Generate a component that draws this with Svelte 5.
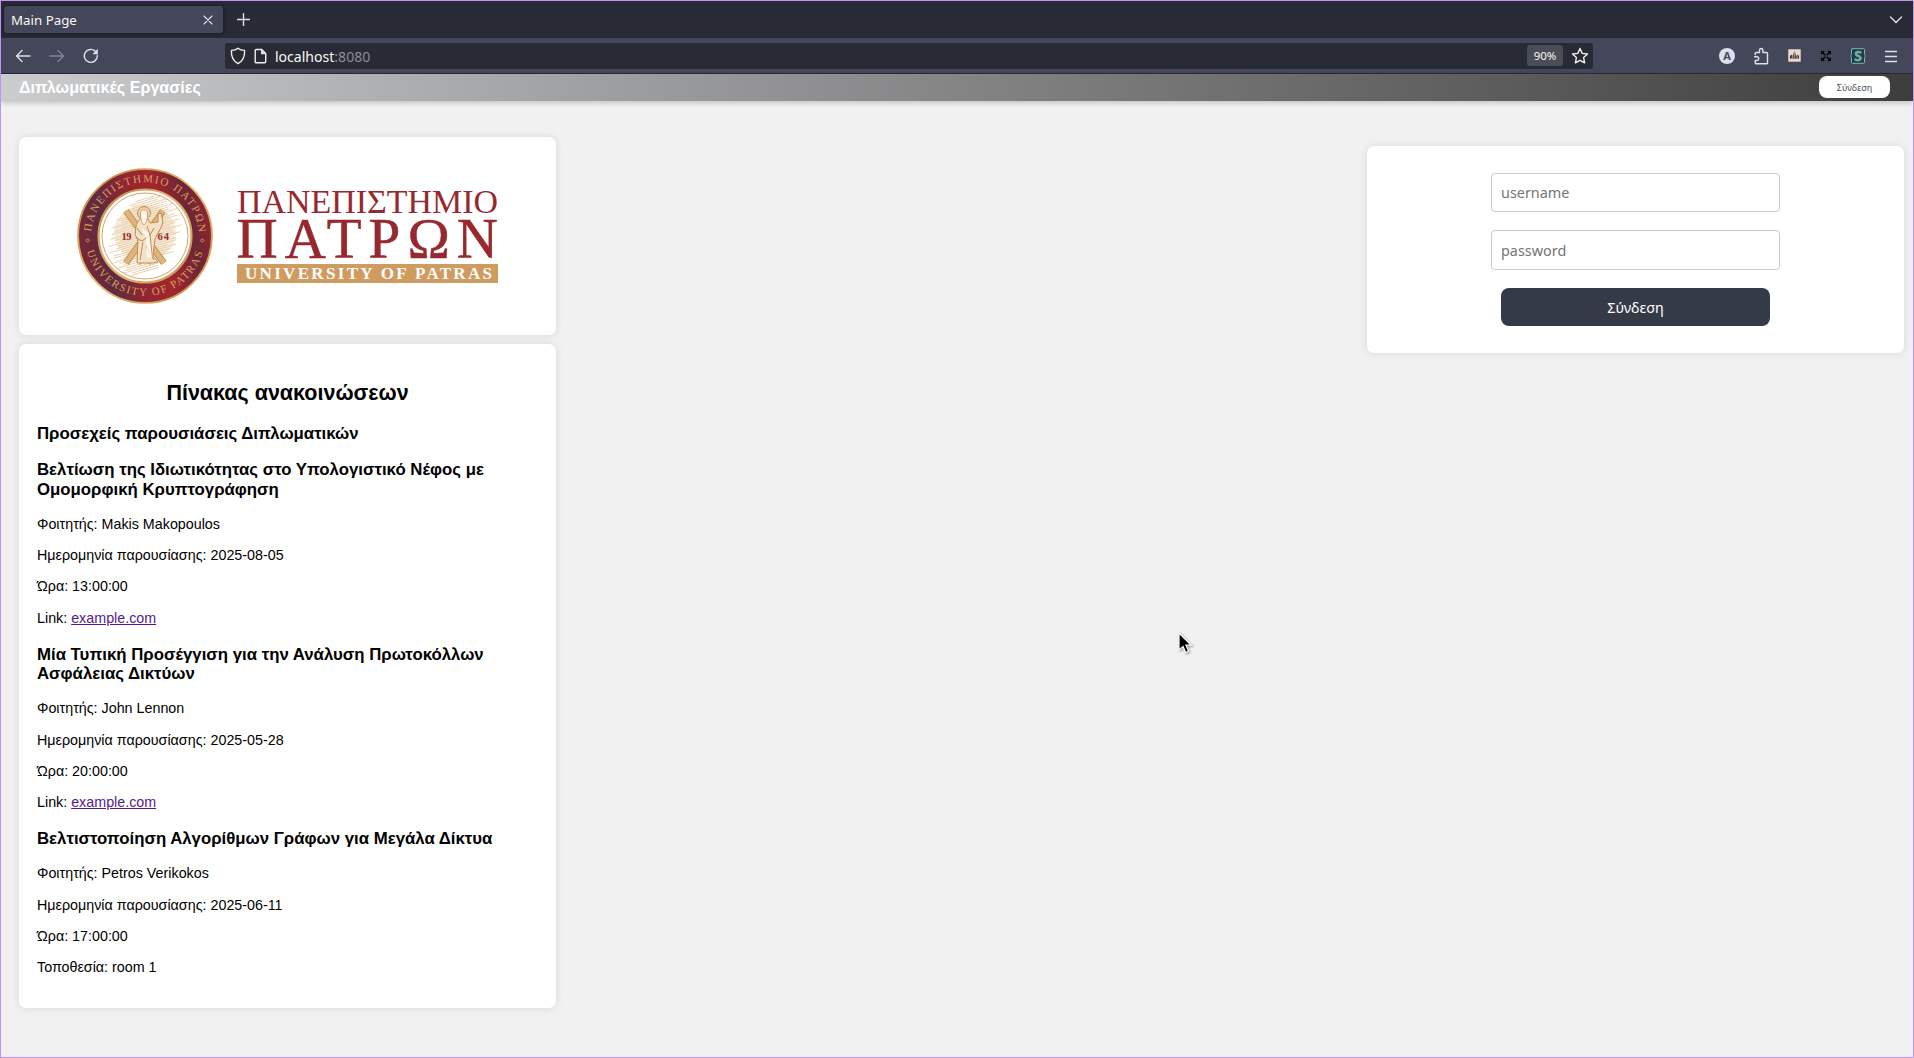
<script>
  const talks = [
    {
      title: 'Βελτίωση της Ιδιωτικότητας στο Υπολογιστικό Νέφος με Ομομορφική Κρυπτογράφηση',
      student: 'Makis Makopoulos', date: '2025-08-05', time: '13:00:00', link: 'example.com'
    },
    {
      title: 'Μία Τυπική Προσέγγιση για την Ανάλυση Πρωτοκόλλων Ασφάλειας Δικτύων',
      student: 'John Lennon', date: '2025-05-28', time: '20:00:00', link: 'example.com'
    },
    {
      title: 'Βελτιστοποίηση Αλγορίθμων Γράφων για Μεγάλα Δίκτυα',
      student: 'Petros Verikokos', date: '2025-06-11', time: '17:00:00', place: 'room 1'
    }
  ];
  // pencil strokes behind the figure of the seal
  const strokes = Array.from({ length: 34 }, (_, i) => {
    const t = -37 + i * 2.2;
    const h = Math.sqrt(Math.max(0, 39 * 39 - t * t)) * (0.78 + 0.16 * Math.sin(i * 2.3));
    return { x1: -h, y1: t + h * 0.28, x2: h, y2: t - h * 0.32 };
  });
</script>

<div class="window">
  <div class="tabs">
    <div class="tab">
      <span>Main Page</span>
      <svg width="10" height="10" viewBox="0 0 10 10"><path d="M1 1l8 8M9 1l-8 8" /></svg>
    </div>
    <svg class="plus" width="13" height="13" viewBox="0 0 13 13"><path d="M6.500 .5v12M.5 6.500h12" /></svg>
    <svg class="chev" width="14" height="8" viewBox="0 0 14 8"><path d="M1.500 1L7 6.500 12.500 1" /></svg>
  </div>

  <div class="toolbar">
    <svg class="back" width="16" height="14" viewBox="0 0 16 14"><path d="M15 7H1.500M7 1.500L1.500 7 7 12.500" /></svg>
    <svg class="fwd" width="16" height="14" viewBox="0 0 16 14"><path d="M1 7h13.500M9 1.500L14.500 7 9 12.500" /></svg>
    <svg class="reload" width="16" height="16" viewBox="0 0 16 16"><path d="M12.600 3.500A6.500 6.500 0 1 0 14.300 7.500" /><path class="solid" d="M14.800 .8v5.400H9.400z" /></svg>
    <div class="url">
      <svg width="16" height="18" viewBox="0 0 16 18"><path d="M8 1.200c1.800 1.600 4 2.200 6.600 2.200.3 6-1.300 10.400-6.600 13.300C2.700 13.800 1.100 9.400 1.400 3.400 4 3.400 6.200 2.800 8 1.200z" /></svg>
      <svg class="page" width="13" height="16" viewBox="0 0 13 16"><path d="M2.200 1.500h5.500l4 4v8.200a1 1 0 0 1-1 1H2.200a1 1 0 0 1-1-1V2.500a1 1 0 0 1 1-1z" /><path class="solid" d="M7 1l5.500 5.300H7z" /></svg>
      <span class="addr">localhost<i>:8080</i></span>
      <span class="zoom">90%</span>
      <svg class="star" width="18" height="18" viewBox="0 0 18 18"><path d="M9 1.500l2.200 4.900 5.300.6-3.900 3.600 1 5.300L9 13.300l-4.600 2.600 1-5.300L1.500 7l5.300-.6z" /></svg>
    </div>
    <div class="ext">
      <div class="avatar">A</div>
      <svg width="16" height="18" viewBox="0 0 16 18"><path d="M2.200 7.800V6.500a1 1 0 0 1 1-1h3.300V3.200a1.700 1.700 0 0 1 3.400 0v2.300h3.600a1 1 0 0 1 1 1v9.200a1 1 0 0 1-1 1H3.200a1 1 0 0 1-1-1v-2.200h1.600a1.900 1.900 0 0 0 0-3.800H1.600" /></svg>
      <svg class="photo" width="13" height="13" viewBox="0 0 13 13"><rect width="13" height="13" rx="1" fill="#c3aea1" /><rect x="1" y="1" width="11" height="11" fill="#e6dbd2" /><path d="M2 9.500V7l1.500-1.500.8 1.500 1-.5V4.500h2.400v2l1 .5 1-1.500L11 7v2.500z" fill="#39353a" /><path d="M6.500 3v5M4.500 7v2M9 7v2" stroke="#a58b7c" /></svg>
      <svg class="expand" width="12" height="12" viewBox="0 0 12 12"><path d="M1.500 1.500L5.200 5.200M10.500 1.500L6.800 5.200M10.500 10.500L6.800 6.800M1.500 10.500l3.700-3.700" /><path class="tips" d="M1 4.800V1h3.800zM7.200 1H11v3.800zM11 7.200V11H7.200zM4.800 11H1V7.200z" /></svg>
      <svg class="sty" width="16" height="16" viewBox="0 0 16 16"><path d="M2.500 .7h11a1 1 0 0 1 1 1V6.500L15.500 8l-1 1.500v4.800a1 1 0 0 1-1 1h-11a1 1 0 0 1-1-1V9.500L.5 8l1-1.500V1.700a1 1 0 0 1 1-1z" /><text x="8" y="13.200" text-anchor="middle">S</text></svg>
      <svg class="menu" width="12" height="12" viewBox="0 0 12 12"><path d="M0 1.500h12M0 6.500h12M0 11.500h12" /></svg>
    </div>
  </div>

  <header>
    <h1>Διπλωματικές Εργασίες</h1>
    <button>Σύνδεση</button>
  </header>

  <main>
    <div class="left">
      <section class="card logo">
        <svg width="537" height="198" viewBox="19 137 537 198">
          <defs>
            <linearGradient id="band" x1="0" y1="0.6" x2="1" y2="0.4">
              <stop offset="0" stop-color="#7b2636" /><stop offset=".2" stop-color="#5c2b3f" />
              <stop offset=".4" stop-color="#8d2632" /><stop offset=".62" stop-color="#a3262e" />
              <stop offset=".85" stop-color="#6c2636" /><stop offset="1" stop-color="#912631" />
            </linearGradient>
            <linearGradient id="gold" x1="0" y1="0" x2="1" y2="1">
              <stop offset="0" stop-color="#c58a45" /><stop offset=".5" stop-color="#e3b673" /><stop offset="1" stop-color="#c98f4b" />
            </linearGradient>
            <path id="over" d="M91.200 232.800A53.900 53.900 0 0 1 198.800 232.800" />
            <path id="under" d="M86.600 250.200A60.200 60.200 0 0 0 203.400 250.200" />
          </defs>
          <circle cx="145" cy="236" r="66.900" fill="url(#band)" stroke="url(#gold)" stroke-width="1.900" />
          <circle cx="145" cy="236" r="46.500" fill="#fff" stroke="url(#gold)" stroke-width="2.200" />
          <circle cx="145" cy="236" r="43" fill="none" stroke="#cf9a5b" stroke-width=".9" />
          <g transform="translate(145 236)">
            <g stroke="#e3c08f" stroke-width="1" opacity=".75">
              {#each strokes as s}<line x1={s.x1} y1={s.y1} x2={s.x2} y2={s.y2} />{/each}
            </g>
            <ellipse rx="31" ry="28" cy="-3" fill="#e9cda5" opacity=".4" />
            <g stroke="#c9935a" stroke-width="6.500"><path d="M-19-25L19 27M18-25L-19 27" /></g>
            <g stroke="#e0b57c" stroke-width="4.500"><path d="M-19-25L19 27M18-25L-19 27" /></g>
            <circle cx="-1" cy="-23" r="6.500" fill="#ecd2ab" stroke="#c08a4d" />
            <path d="M-5-17C-10-13-9-6-10-1l3 4-1 24h16l5-1-5-6 2-17C13-4 17-9 18-14l-2-9-3 1 0 8-8 1-2-4z" fill="#f3e2c8" stroke="#c08a4d" />
            <path d="M-4.500-24q3.500-5 7 0v5q-1 7-3.500 8-2.500-1-3.500-8z" fill="#fff6e8" stroke="#c08a4d" stroke-width=".7" />
            <path d="M2-10l3 9-8 6-6-3M5-1l2 20M-2 6l-3 18M1 10q4 8 8 14M-8-8l5 7M9-8l-4 7M-5 27v2M5 27v2" fill="none" stroke="#c08a4d" />
            <path d="M-4-8l5 10 1 20 5-1-3-24z" fill="#fff" opacity=".7" />
          </g>
          <g class="year"><text x="121.500" y="240" textLength="10">19</text><text x="157.500" y="240" textLength="11.500">64</text></g>
          <g class="ring">
            <text><textPath href="#over" textLength="161" startOffset="1">ΠΑΝΕΠΙΣΤΗΜΙΟ ΠΑΤΡΩΝ</textPath></text>
            <text><textPath href="#under" textLength="156" startOffset="1">UNIVERSITY OF PATRAS</textPath></text>
            <circle cx="87.700" cy="240.500" r="1.500" /><circle cx="202.300" cy="240.500" r="1.500" />
          </g>
          <g class="word">
            <text x="237" y="212.700" font-size="34.500" textLength="261" lengthAdjust="spacingAndGlyphs">ΠΑΝΕΠΙΣΤΗΜΙΟ</text>
            <text class="big" x="236.500" y="257.700" font-size="57" textLength="261.500">ΠΑΤΡΩΝ</text>
          </g>
          <rect x="237" y="264" width="261" height="19" fill="#cf9b5f" />
          <text class="eng" x="245" y="279.200" textLength="247">UNIVERSITY OF PATRAS</text>
        </svg>
      </section>

      <section class="card board">
        <h2>Πίνακας ανακοινώσεων</h2>
        <h3>Προσεχείς παρουσιάσεις Διπλωματικών</h3>
        {#each talks as t}
          <h3>{t.title}</h3>
          <p>Φοιτητής: {t.student}</p>
          <p>Ημερομηνία παρουσίασης: {t.date}</p>
          <p>Ώρα: {t.time}</p>
          {#if t.link}<p>Link: <a href="#link">{t.link}</a></p>{:else}<p>Τοποθεσία: {t.place}</p>{/if}
        {/each}
      </section>
    </div>

    <form class="card login">
      <input placeholder="username" />
      <input type="password" placeholder="password" />
      <button type="button">Σύνδεση</button>
    </form>
  </main>

  <svg class="cursor" width="18" height="26" viewBox="0 0 18 26"><path d="M2 2v17l4-3.600 2.600 6.200 3-1.300L9 14.200h5.300z" /></svg>
</div>

<style>
  .window { position: relative; box-sizing: border-box; width: 1914px; height: 1058px; border: 1px solid #bd93f9; background: #f1f1f1; overflow: hidden; font-family: "Liberation Sans", Arial, sans-serif; display: flex; flex-direction: column; }
  svg { display: block; flex: none; }
  .tabs, .toolbar { display: flex; align-items: center; box-sizing: border-box; flex: none; font-family: "Noto Sans", sans-serif; color: #f8f8f2; }
  .tabs { height: 37px; background: #282a36; padding: 0 10px 0 3px; }
  .tabs svg, .toolbar svg { fill: none; stroke: #dcdfec; stroke-width: 1.400; stroke-linecap: round; stroke-linejoin: round; }
  .tab { width: 219px; height: 27px; box-sizing: border-box; padding: 0 10px 0 7px; background: #44475a; border-radius: 3px; box-shadow: 0 0 4px rgba(0,0,0,.5); display: flex; align-items: center; justify-content: space-between; font-size: 13.300px; }
  .tabs .tab svg { stroke-width: 1.100; }
  .plus { margin-left: 14px; }
  .chev { margin-left: auto; }
  .toolbar { height: 36px; background: #44475a; border-bottom: 1px solid #282a36; padding: 0 16px 0 14px; }
  .fwd { margin-left: 18px; opacity: .4; }
  .reload { margin-left: 18px; }
  .toolbar .solid { fill: #dcdfec; stroke: none; }
  .url { margin-left: 126px; width: 1368px; height: 26px; box-sizing: border-box; padding: 0 4px 0 5px; border-radius: 3px; background: #282a36; display: flex; align-items: center; font-size: 14.050px; }
  .url svg { stroke: #f0f0ea; }
  .page { margin-left: 8px; }
  .addr { margin-left: 8px; padding-top: 2px; }
  .addr i { font-style: normal; color: #8b8c92; }
  .zoom { margin-left: auto; width: 36px; height: 21px; line-height: 22px; text-align: center; background: #4a4c57; border-radius: 3px; font-size: 11.500px; }
  .star { margin-left: 8px; }
  .ext { margin-left: auto; display: flex; align-items: center; }
  .avatar { width: 16px; height: 16px; border-radius: 50%; background: #dcdfec; color: #44475a; font-size: 11px; line-height: 16px; text-align: center; font-weight: 700; margin-right: 18px; }
  .toolbar .photo { margin-left: 19px; stroke: none; }
  .expand { margin-left: 19px; }
  .toolbar .expand { stroke: #000; stroke-width: 1.400; stroke-linecap: butt; }
  .expand .tips { fill: #000; stroke: none; }
  .sty { margin-left: 18px; }
  .toolbar .sty { overflow: visible; }
  .toolbar .sty path { fill: #1f3c43; stroke: #79b5b2; stroke-width: 1; }
  .sty text { fill: #79aba9; stroke: #79aba9; stroke-width: .6; font: bold 14px "Noto Sans", sans-serif; }
  .menu { margin-left: 19px; }
  .toolbar .menu { stroke-linecap: butt; stroke-width: 1.300; overflow: visible; }
  header { height: 27px; flex: none; box-sizing: border-box; padding: 0 23px 0 18px; display: flex; align-items: flex-start; justify-content: space-between; background: linear-gradient(90deg, #cbccce, #3d3d3d); box-shadow: 0 2px 5px rgba(0,0,0,.2); }
  h1 { margin: 4px 0 0; font-size: 16.120px; line-height: 19px; color: #fff; }
  header button { width: 71px; height: 22px; margin-top: 2px; padding: 1px 0 0; border: 0; border-radius: 8px; background: #fff; color: #4b4f5c; font: 9px "Noto Sans", sans-serif; }
  main { display: flex; justify-content: space-between; align-items: flex-start; padding: 36px 9px 0 18px; }
  .left { width: 537px; display: flex; flex-direction: column; gap: 9px; }
  .card { background: #fff; border-radius: 7px; box-shadow: 0 0 9px rgba(0,0,0,.1); box-sizing: border-box; }
  .logo { height: 198px; }
  .word { fill: #98282f; font-family: "Liberation Serif", serif; }
  .big { stroke: #98282f; stroke-width: .5; }
  .eng { fill: #fff; font: bold 17px "Liberation Serif", serif; }
  .ring { fill: #d6a15f; font: 11px "Liberation Serif", serif; }
  .ring circle { fill: none; stroke: #d6a15f; stroke-width: .8; }
  .year { fill: #98282f; font: bold 10.500px "Liberation Serif", serif; }
  .board { height: 664px; padding: 18px; overflow: hidden; }
  h2 { margin: 18.900px 0 17.900px; font-size: 21.500px; line-height: 25px; text-align: center; }
  h3 { margin: 16.850px 0; font-size: 16.800px; line-height: 19.500px; }
  p { margin: 14.400px 0; font-size: 14.310px; line-height: 16.800px; }
  p + h3 { margin-top: 18.300px; }
  a { color: #551a8b; }
  .login { width: 537px; height: 207px; margin-top: 9px; padding-top: 27px; display: flex; flex-direction: column; align-items: center; }
  input { box-sizing: border-box; width: 289px; height: 39px; margin: 0 0 18px; padding: 0 9px; border: 1px solid #ccc; border-radius: 4px; font: 14.400px "Noto Sans", sans-serif; }
  input::placeholder { color: #757575; }
  .login input + input { height: 40px; }
  .login button { width: 269px; height: 38px; border: 0; border-radius: 8px; background: #343a46; color: #fff; font: 14.400px "Noto Sans", sans-serif; }
  .cursor { position: absolute; left: 1176px; top: 630px; fill: #000; stroke: #fff; stroke-width: 1.200; filter: drop-shadow(1px 1px 1px rgba(0,0,0,.4)); }
</style>
